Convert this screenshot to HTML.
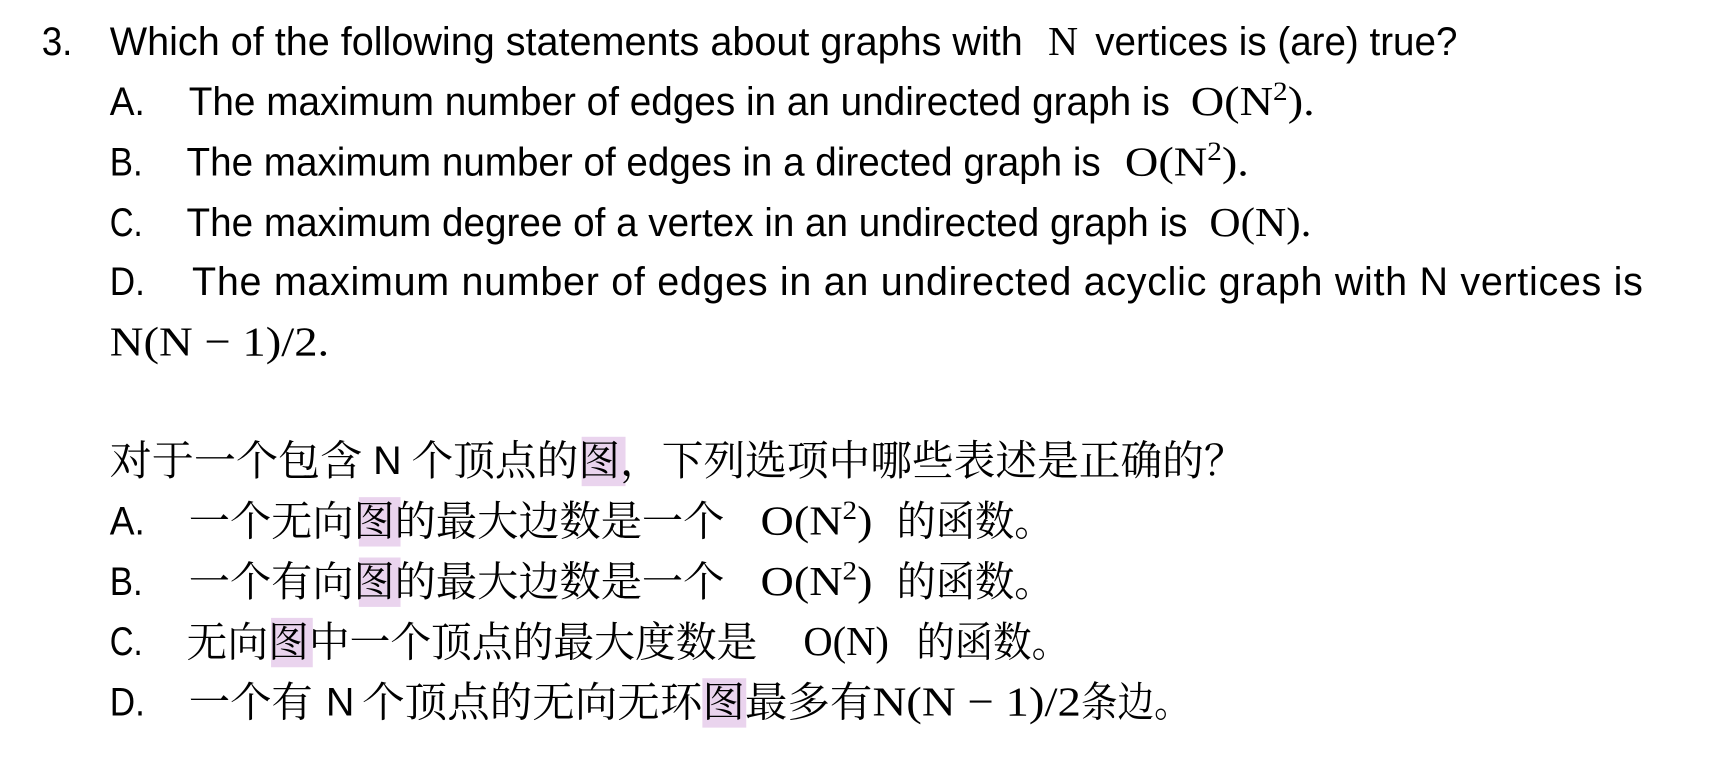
<!DOCTYPE html>
<html><head><meta charset="utf-8"><style>
html,body{margin:0;padding:0;background:#fff;}
svg{display:block;}
.s{font-family:"Liberation Sans",sans-serif;font-size:36px;fill:#000;}
.m{font-family:"Liberation Serif",serif;font-size:38px;fill:#000;}
.c{font-family:"Noto Serif CJK SC",serif;font-size:38px;fill:#000;}
.sup{font-size:24px;}
</style></head><body>
<svg width="1712" height="760" viewBox="0 0 1560 692.5" preserveAspectRatio="none" xmlns="http://www.w3.org/2000/svg">
<g fill="#ead4ee">
<rect x="530" y="398" width="40" height="45"/>
<rect x="327" y="453" width="38" height="45"/>
<rect x="327" y="508" width="38" height="45"/>
<rect x="247" y="563" width="38" height="45"/>
<rect x="640" y="618" width="40" height="45"/>
</g>
<text class="s" x="38" y="50" textLength="28" lengthAdjust="spacingAndGlyphs">3.</text>
<text class="s" x="100" y="50" textLength="832" lengthAdjust="spacingAndGlyphs">Which of the following statements about graphs with</text>
<text class="m" x="955" y="50">N</text>
<text class="s" x="998" y="50" textLength="330" lengthAdjust="spacingAndGlyphs">vertices is (are) true?</text>

<text class="s" x="100" y="105" textLength="32" lengthAdjust="spacingAndGlyphs">A.</text>
<text class="s" x="172" y="105" textLength="894" lengthAdjust="spacingAndGlyphs">The maximum number of edges in an undirected graph is</text>
<text class="m" x="1085" y="105" textLength="113" lengthAdjust="spacingAndGlyphs">O(N<tspan class="sup" dy="-14">2</tspan><tspan dy="14">).</tspan></text>

<text class="s" x="100" y="160" textLength="30" lengthAdjust="spacingAndGlyphs">B.</text>
<text class="s" x="170" y="160" textLength="833" lengthAdjust="spacingAndGlyphs">The maximum number of edges in a directed graph is</text>
<text class="m" x="1025" y="160" textLength="113" lengthAdjust="spacingAndGlyphs">O(N<tspan class="sup" dy="-14">2</tspan><tspan dy="14">).</tspan></text>

<text class="s" x="100" y="215" textLength="30" lengthAdjust="spacingAndGlyphs">C.</text>
<text class="s" x="170" y="215" textLength="912" lengthAdjust="spacingAndGlyphs">The maximum degree of a vertex in an undirected graph is</text>
<text class="m" x="1102" y="215" textLength="93" lengthAdjust="spacingAndGlyphs">O(N).</text>

<text class="s" x="100" y="269" textLength="32" lengthAdjust="spacingAndGlyphs">D.</text>
<text class="s" x="175" y="269" textLength="1322" lengthAdjust="spacing">The maximum number of edges in an undirected acyclic graph with N vertices is</text>
<text class="m" x="100" y="324" textLength="200" lengthAdjust="spacingAndGlyphs">N(N − 1)/2.</text>

<text class="c" x="100" y="433" textLength="230" lengthAdjust="spacingAndGlyphs">对于一个包含</text>
<text class="s" x="340" y="432">N</text>
<text class="c" x="375" y="433" textLength="760" lengthAdjust="spacingAndGlyphs">个顶点的图，下列选项中哪些表述是正确的？</text>

<text class="s" x="100" y="487" textLength="32" lengthAdjust="spacingAndGlyphs">A.</text>
<text class="c" x="172" y="488" textLength="488" lengthAdjust="spacingAndGlyphs">一个无向图的最大边数是一个</text>
<text class="m" x="693" y="487" textLength="102" lengthAdjust="spacingAndGlyphs">O(N<tspan class="sup" dy="-14">2</tspan><tspan dy="14">)</tspan></text>
<text class="c" x="817" y="488" textLength="143" lengthAdjust="spacingAndGlyphs">的函数。</text>

<text class="s" x="100" y="542" textLength="30" lengthAdjust="spacingAndGlyphs">B.</text>
<text class="c" x="172" y="543" textLength="488" lengthAdjust="spacingAndGlyphs">一个有向图的最大边数是一个</text>
<text class="m" x="693" y="542" textLength="102" lengthAdjust="spacingAndGlyphs">O(N<tspan class="sup" dy="-14">2</tspan><tspan dy="14">)</tspan></text>
<text class="c" x="817" y="543" textLength="143" lengthAdjust="spacingAndGlyphs">的函数。</text>

<text class="s" x="100" y="597" textLength="30" lengthAdjust="spacingAndGlyphs">C.</text>
<text class="c" x="170" y="598" textLength="520" lengthAdjust="spacingAndGlyphs">无向图中一个顶点的最大度数是</text>
<text class="m" x="732" y="597" textLength="78" lengthAdjust="spacingAndGlyphs">O(N)</text>
<text class="c" x="835" y="598" textLength="140" lengthAdjust="spacingAndGlyphs">的函数。</text>

<text class="s" x="100" y="652" textLength="32" lengthAdjust="spacingAndGlyphs">D.</text>
<text class="c" x="172" y="653" textLength="113" lengthAdjust="spacingAndGlyphs">一个有</text>
<text class="s" x="297" y="652">N</text>
<text class="c" x="330" y="653" textLength="465" lengthAdjust="spacingAndGlyphs">个顶点的无向无环图最多有</text>
<text class="m" x="795" y="652" textLength="190" lengthAdjust="spacingAndGlyphs">N(N − 1)/2</text>
<text class="c" x="985" y="653" textLength="100" lengthAdjust="spacingAndGlyphs">条边。</text>
</svg>
</body></html>
